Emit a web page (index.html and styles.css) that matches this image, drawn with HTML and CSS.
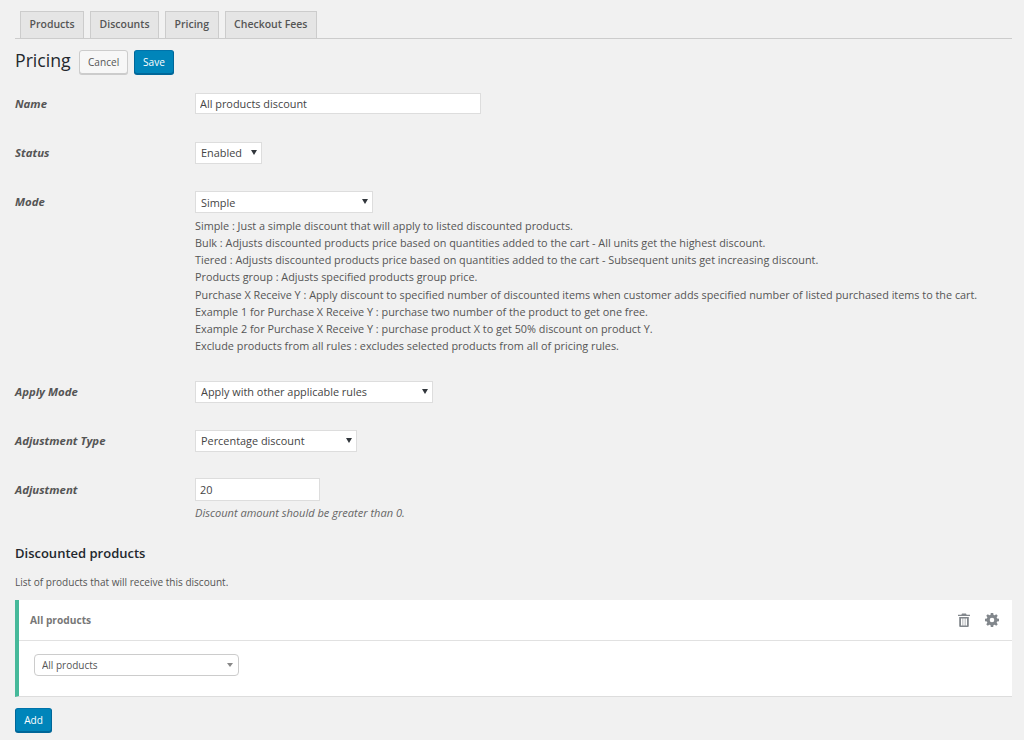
FILE: index.html
```html
<!DOCTYPE html>
<html lang="en">
<head>
<meta charset="utf-8">
<title>Pricing</title>
<link rel="stylesheet" href="styles.css">
</head>
<body>
<nav class="tabs">
  <a class="tab">Products</a>
  <a class="tab">Discounts</a>
  <a class="tab">Pricing</a>
  <a class="tab">Checkout Fees</a>
</nav>
<header class="title-row">
  <h1>Pricing</h1>
  <button class="btn btn-secondary" type="button">Cancel</button>
  <button class="btn btn-primary" type="button">Save</button>
</header>
<form class="form">
  <div class="row row-name">
    <label>Name</label>
    <div class="field"><input class="input input-name" type="text" value="All products discount"></div>
  </div>
  <div class="row row-status">
    <label>Status</label>
    <div class="field"><span class="select w-status"><select><option>Enabled</option></select></span></div>
  </div>
  <div class="row row-mode">
    <label>Mode</label>
    <div class="field">
      <span class="select w-mode"><select><option>Simple</option></select></span>
      <div class="desc">
        <p>Simple : Just a simple discount that will apply to listed discounted products.</p>
        <p>Bulk : Adjusts discounted products price based on quantities added to the cart - All units get the highest discount.</p>
        <p>Tiered : Adjusts discounted products price based on quantities added to the cart - Subsequent units get increasing discount.</p>
        <p>Products group : Adjusts specified products group price.</p>
        <p>Purchase X Receive Y : Apply discount to specified number of discounted items when customer adds specified number of listed purchased items to the cart.</p>
        <p>Example 1 for Purchase X Receive Y : purchase two number of the product to get one free.</p>
        <p>Example 2 for Purchase X Receive Y : purchase product X to get 50% discount on product Y.</p>
        <p>Exclude products from all rules : excludes selected products from all of pricing rules.</p>
      </div>
    </div>
  </div>
  <div class="row row-apply">
    <label>Apply Mode</label>
    <div class="field"><span class="select w-apply"><select><option>Apply with other applicable rules</option></select></span></div>
  </div>
  <div class="row row-type">
    <label>Adjustment Type</label>
    <div class="field"><span class="select w-type"><select><option>Percentage discount</option></select></span></div>
  </div>
  <div class="row row-adjust">
    <label>Adjustment</label>
    <div class="field">
      <input class="input input-adjust" type="text" value="20">
      <p class="hint">Discount amount should be greater than 0.</p>
    </div>
  </div>
</form>
<h2>Discounted products</h2>
<p class="sub">List of products that will receive this discount.</p>
<section class="panel">
  <div class="panel-head">
    <strong>All products</strong>
    <div class="icons">
      <svg class="icon" viewBox="0 0 14 14" aria-hidden="true"><path d="M5 0.500h4l.6 1.200H13v1.300H1V1.700h3.400z" fill="#82878c"/><path fill-rule="evenodd" d="M2.200 4h9.600v9a1 1 0 0 1-1 1H3.200a1 1 0 0 1-1-1zM4 5.500v7h1.600v-7zM6.200 5.500v7h1.600v-7zM8.400 5.500v7H10v-7z" fill="#82878c"/></svg>
      <svg class="icon" viewBox="0 0 14 14" aria-hidden="true"><path fill-rule="evenodd" d="M5.800 0h2.400l.35 1.900 1.100.45L11.250 1.250l1.500 1.500-1.100 1.600.45 1.100 1.900.35v2.400l-1.900.35-.45 1.100 1.100 1.600-1.500 1.500-1.600-1.100-1.100.45L8.200 14H5.800l-.35-1.900-1.100-.45-1.600 1.100-1.500-1.500 1.100-1.600-.45-1.100L0 8.200V5.800l1.900-.35.45-1.100-1.100-1.600 1.500-1.500 1.600 1.100 1.100-.45zM7 4.700a2.300 2.300 0 1 0 0 4.600 2.300 2.300 0 0 0 0-4.600z" fill="#82878c"/></svg>
    </div>
  </div>
  <div class="panel-body">
    <span class="select2"><select><option>All products</option></select></span>
  </div>
</section>
<button class="btn btn-primary btn-add" type="button">Add</button>
</body>
</html>
```

FILE: styles.css
```css
* { box-sizing: border-box; }
html, body { height: 740px; overflow: hidden; }
body {
  margin: 0;
  padding: 11px 12px 0 15px;
  background: #f1f1f1;
  color: #555;
  font: 10.84px/17px "Open Sans", sans-serif;
}
.tabs {
  display: flex;
  gap: 6px;
  height: 28px;
  padding-left: 5px;
  border-bottom: 1px solid #ccc;
}
.tab {
  height: 28px;
  padding: 4px 8.5px 0;
  border: 1px solid #ccc;
  background: #e5e5e5;
  color: #555;
  font-size: 10.5px;
  font-weight: 600;
}
.title-row {
  display: flex;
  align-items: center;
  height: 24px;
  margin-top: 11px;
}
h1 {
  margin: -4px 7px 0 0;
  width: 57px;
  font-size: 17.7px;
  font-weight: 400;
  line-height: 24px;
  color: #23282d;
}
.btn {
  height: 24px;
  padding: 0 8px;
  border: 1px solid #ccc;
  border-radius: 3px;
  font: 10.1px/22px "Open Sans", sans-serif;
}
.btn-secondary {
  width: 49px;
  margin-right: 6px;
  background: #f7f7f7;
  color: #555;
  box-shadow: 0 1px 0 #ccc;
}
.btn-primary {
  background: #0085ba;
  border-color: #0073aa #006799 #006799;
  color: #fff;
  box-shadow: 0 1px 0 #006799;
}
.title-row .btn-primary { width: 40px; }
.form { display: flex; flex-direction: column; }
.row { display: flex; }
.row > label {
  width: 180px;
  flex: none;
  padding-top: 2px;
  font-size: 11.4px;
  font-weight: 700;
  font-style: italic;
  color: #555;
}
.row-adjust > label { padding-top: 3px; }
.row-name { margin-top: 19px; height: 49px; }
.row-status { height: 49px; }
.row-mode { height: 190px; }
.row-apply { height: 49px; }
.row-type { height: 48px; }
.input {
  display: block;
  height: 21px;
  padding: 0 4px;
  border: 1px solid #ddd;
  background: #fff;
  color: #444;
  font: 10.9px "Open Sans", sans-serif;
}
.input-name { width: 286px; }
.input-adjust { width: 125px; height: 23px; }
.select { display: block; position: relative; height: 22px; }
.select select, .select2 select {
  appearance: none;
  display: block;
  width: 100%;
  height: 100%;
  padding: 0 5px 1px;
  border: 1px solid #ddd;
  background: #fff;
  color: #444;
  font: 10.9px "Open Sans", sans-serif;
}
.w-mode select { padding-bottom: 0; }
.select::after {
  content: "";
  position: absolute;
  right: 5px;
  top: 8px;
  border: 3.5px solid transparent;
  border-top: 5px solid #32373c;
  border-bottom: 0;
}
.w-status { width: 67px; }
.w-mode { width: 178px; }
.w-apply { width: 238px; }
.w-type { width: 162px; }
.desc { margin-top: 4px; }
.desc p { margin: 0; line-height: 17.14px; white-space: nowrap; }
.hint {
  margin: 3px 0 0;
  font-size: 11.05px;
  font-style: italic;
  color: #666;
  line-height: 17px;
}
h2 {
  margin: 22px 0 0;
  height: 20px;
  font-size: 13px;
  font-weight: 600;
  line-height: 20px;
  color: #23282d;
}
.sub { margin: 11px 0 0; height: 17px; font-size: 10.05px; }
.panel {
  margin-top: 9px;
  height: 97px;
  background: #fff;
  border-left: 4px solid #46b99a;
  border-bottom: 1px solid #ddd;
}
.panel-head {
  display: flex;
  align-items: center;
  justify-content: space-between;
  height: 41px;
  padding: 0 13px 0 11px;
  border-bottom: 1px solid #e1e1e1;
  color: #777;
}
.panel-head strong { font-size: 10.2px; }
.icons { display: flex; gap: 14px; }
.icon { width: 14px; height: 14px; display: block; }
.panel-body { padding: 13px 15px; }
.select2 {
  display: block;
  position: relative;
  width: 205px;
  height: 22px;
}
.select2 select {
  padding: 0 7px;
  border: 1px solid #ccc;
  border-radius: 4px;
  color: #555;
  font-size: 10px;
}
.select2::after {
  content: "";
  position: absolute;
  right: 6px;
  top: 9px;
  border: 3.5px solid transparent;
  border-top: 4px solid #888;
  border-bottom: 0;
}
.btn-add { display: block; width: 37px; margin-top: 11px; padding: 0; }
```
